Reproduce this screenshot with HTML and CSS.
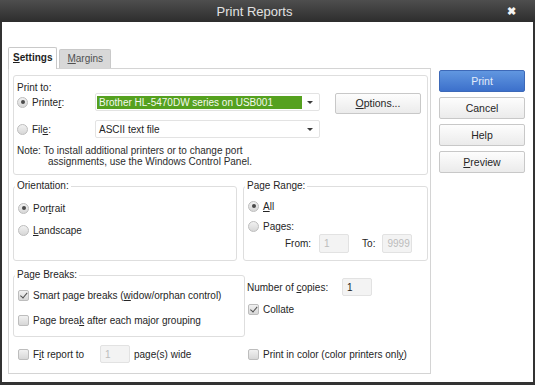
FILE: index.html
```html
<!DOCTYPE html>
<html lang="en">
<head>
    <meta charset="UTF-8">
    <meta name="viewport" content="width=device-width, initial-scale=1.0">
    <title>Print Reports</title>
    <link rel="stylesheet" href="styles.css">
</head>
<body>

    <div class="window">
        <div class="titlebar">
            <span class="title">Print Reports</span>
            <span class="close">&#10006;</span>
        </div>

        <div class="frame">
            <div class="content">

                <div class="main">
                    <div class="tabs">
                        <div class="tab active"><u>S</u>ettings</div>
                        <div class="tab"><u>M</u>argins</div>
                    </div>

                    <div class="panel">
                        <!-- Print to -->
                        <div class="box print-to">
                            <div class="box-label">Print to:</div>

                            <div class="dest-row">
                                <span class="radio checked"></span>
                                <span class="dest-label">Printe<u>r</u>:</span>
                                <div class="select">
                                    <span class="select-value highlighted">Brother HL-5470DW series on USB001</span>
                                    <span class="select-arrow"></span>
                                </div>
                                <a href="#" class="btn options-btn"><u>O</u>ptions...</a>
                            </div>

                            <div class="dest-row file-row">
                                <span class="radio"></span>
                                <span class="dest-label">Fil<u>e</u>:</span>
                                <div class="select">
                                    <span class="select-value">ASCII text file</span>
                                    <span class="select-arrow"></span>
                                </div>
                            </div>

                            <p class="note">Note: To install additional printers or to change port<br>assignments, use the Windows Control Panel.</p>
                        </div>

                        <div class="split">
                            <fieldset class="group orientation">
                                <legend>Orientation:</legend>
                                <div class="opts">
                                    <div class="opt"><span class="radio checked"></span><span>Por<u>t</u>rait</span></div>
                                    <div class="opt"><span class="radio"></span><span><u>L</u>andscape</span></div>
                                </div>
                            </fieldset>

                            <fieldset class="group range">
                                <legend>Page Range:</legend>
                                <div class="opts tight">
                                    <div class="opt"><span class="radio checked"></span><span><u>A</u>ll</span></div>
                                    <div class="opt"><span class="radio"></span><span>Pa<u>g</u>es:</span></div>
                                    <div class="from-to">
                                        <span>From:</span>
                                        <span class="field disabled from-field">1</span>
                                        <span class="to-label">To:</span>
                                        <span class="field disabled to-field">9999</span>
                                    </div>
                                </div>
                            </fieldset>
                        </div>

                        <div class="split lower">
                            <fieldset class="group breaks">
                                <legend>Page Breaks:</legend>
                                <div class="opts wide">
                                    <div class="opt"><span class="check checked"></span><span>Smart page breaks (<u>w</u>idow/orphan control)</span></div>
                                    <div class="opt"><span class="check"></span><span>Page brea<u>k</u> after each major grouping</span></div>
                                </div>
                            </fieldset>

                            <div class="copies">
                                <div class="copies-row">
                                    <span class="copies-label">Number of <u>c</u>opies:</span>
                                    <span class="field copies-field">1</span>
                                </div>
                                <div class="opt"><span class="check checked"></span><span>Collate</span></div>
                            </div>
                        </div>

                        <div class="bottom-row">
                            <div class="fit">
                                <span class="check"></span>
                                <span class="fit-label">F<u>i</u>t report to</span>
                                <span class="field disabled fit-field">1</span>
                                <span>page(s) wide</span>
                            </div>
                            <div class="opt"><span class="check"></span><span>Print in color (color printers onl<u>y</u>)</span></div>
                        </div>
                    </div>
                </div>

                <div class="actions">
                    <a href="#" class="btn primary">Print</a>
                    <a href="#" class="btn">Cancel</a>
                    <a href="#" class="btn">Help</a>
                    <a href="#" class="btn"><u>P</u>review</a>
                </div>

            </div>
        </div>
    </div>

</body>
</html>
```

FILE: styles.css
```css
body {
    margin: 0;
    background-color: #303030;
    font-family: 'Liberation Sans', Arial, sans-serif;
    font-size: 10px;
    color: #252525;
}

.window {
    width: 535px;
    height: 385px;
    display: flex;
    flex-direction: column;
}

/* title bar */
.titlebar {
    height: 22px;
    display: flex;
    align-items: center;
    padding-left: 8px;
    background: linear-gradient(#4e4e4e, #2d2d2d);
    color: #e2e2e2;
}

.title {
    flex: 1;
    text-align: center;
    font-size: 13px;
}

.close {
    width: 20px;
    margin-right: 14px;
    text-align: center;
    font-size: 11px;
    font-weight: bold;
    color: #f4f4f4;
}

.frame {
    flex: 1;
    display: flex;
    padding: 0 2px 3px;
    background-color: #333;
}

.content {
    flex: 1;
    display: flex;
    gap: 8px;
    padding: 26px 8px 0 6px;
    background-color: #fff;
}

/* tabs */
.main {
    width: 423px;
}

.tabs {
    display: flex;
    align-items: flex-end;
    gap: 2px;
    height: 20px;
    position: relative;
    z-index: 1;
}

.tab {
    height: 18px;
    line-height: 18px;
    padding: 0 7px;
    border: 1px solid #c9c9c9;
    border-bottom: none;
    border-radius: 2px 2px 0 0;
    background-color: #d8d8d8;
    color: #505050;
}

.tab.active {
    height: 21px;
    line-height: 20px;
    padding: 0 4px;
    margin-bottom: -1px;
    background-color: #fff;
    color: #1e1e1e;
    font-weight: bold;
}

.panel {
    height: 306px;
    box-sizing: border-box;
    padding: 6px 2px 0 4px;
    border: 1px solid #d4d4d4;
}

/* print to box */
.box {
    border: 1px solid #dedede;
    border-radius: 3px;
    padding: 6px 3px 7px;
}

.box-label {
    line-height: 12px;
}

.dest-row {
    display: flex;
    align-items: center;
    height: 18px;
    margin-top: -1px;
}

.dest-row.file-row {
    margin-top: 9px;
}

.dest-label {
    width: 63px;
}

.select {
    width: 225px;
    height: 18px;
    box-sizing: border-box;
    display: flex;
    align-items: center;
    padding: 1px;
    border: 1px solid #e3e3e3;
    border-radius: 2px;
}

.select-value {
    flex: 1;
    height: 13px;
    line-height: 13px;
    padding-left: 2px;
}

.select-value.highlighted {
    background-color: #55a11f;
    color: #f4f9ee;
}

.select-arrow {
    width: 16px;
    display: flex;
    justify-content: center;
}

.select-arrow::before {
    content: '';
    border-left: 3px solid transparent;
    border-right: 3px solid transparent;
    border-top: 3px solid #3c3c3c;
}

.note {
    margin: 7px 0 0;
    line-height: 11px;
    padding-left: 31px;
    text-indent: -31px;
    color: #2c2c2c;
}

/* radios and checkboxes */
.radio,
.check {
    display: inline-block;
    width: 11px;
    height: 11px;
    box-sizing: border-box;
    margin-right: 4px;
    border: 1px solid #bdbdbd;
    background: linear-gradient(#f1f1f1, #d7d7d7);
    flex-shrink: 0;
    position: relative;
}

.radio {
    border-radius: 50%;
}

.radio.checked::after {
    content: '';
    position: absolute;
    left: 2.5px;
    top: 2.5px;
    width: 4px;
    height: 4px;
    border-radius: 50%;
    background-color: #4a4a4a;
}

.check {
    border-radius: 2px;
}

.check.checked::after {
    content: '';
    position: absolute;
    left: 3px;
    top: 0.5px;
    width: 2.5px;
    height: 5.5px;
    border-right: 1.5px solid #4d4d4d;
    border-bottom: 1.5px solid #4d4d4d;
    transform: rotate(40deg);
}

/* group boxes */
.split {
    display: flex;
    gap: 6px;
    margin-top: 5px;
}

.split.lower {
    gap: 2px;
    margin-top: 8px;
}

.group {
    margin: 0;
    padding: 0 0 0 1px;
    border: 1px solid #dedede;
    border-radius: 3px;
    min-width: 0;
}

.group legend {
    padding: 0 2px;
    line-height: 12px;
}

.orientation {
    width: 224px;
    box-sizing: border-box;
}

.range {
    width: 185px;
    box-sizing: border-box;
}

.breaks {
    width: 232px;
    box-sizing: border-box;
}

.opts {
    display: flex;
    flex-direction: column;
    gap: 10px;
    padding: 10px 0 0 3px;
}

.opts.tight {
    gap: 8px;
    padding: 8px 0 7px 3px;
}

.opts.wide {
    gap: 13px;
    padding: 8px 0 10px 3px;
}

.opt {
    display: flex;
    align-items: center;
    height: 12px;
}

.from-to {
    display: flex;
    align-items: center;
    margin-top: -6px;
    padding-left: 37px;
}

.field {
    height: 19px;
    width: 30px;
    box-sizing: border-box;
    line-height: 17px;
    padding-left: 4px;
    border: 1px solid #e2e2e2;
    border-radius: 2px;
    background-color: #f3f3f3;
}

.field.disabled {
    color: #bcbcbc;
}

.from-field {
    margin-left: 8px;
}

.to-label {
    margin-left: 13px;
    margin-right: 7px;
}

/* copies */
.copies {
    padding-top: 9px;
}

.copies-row {
    display: flex;
    align-items: center;
    margin-bottom: 7px;
}

.copies-label {
    width: 95px;
}

.copies-field {
    height: 18px;
    color: #222;
}

.copies .opt {
    padding-left: 1px;
}

/* bottom row */
.bottom-row {
    display: flex;
    align-items: center;
    margin-top: 8px;
    padding-left: 5px;
}

.fit {
    display: flex;
    align-items: center;
    width: 230px;
}

.fit-label {
    width: 67px;
}

.fit-field {
    margin-right: 4px;
    height: 18px;
}

/* buttons */
.actions {
    width: 86px;
    display: flex;
    flex-direction: column;
    gap: 5px;
    padding-top: 22px;
}

.btn {
    display: block;
    height: 22px;
    box-sizing: border-box;
    line-height: 20px;
    text-align: center;
    text-decoration: none;
    font-size: 10.5px;
    color: #262626;
    border: 1px solid #c8c8c8;
    border-radius: 2px;
    background: linear-gradient(#fdfdfd, #ebebeb);
}

.btn.primary {
    border-color: #3d69b8;
    background: linear-gradient(#6197e0, #3c70cb);
    color: #e3ecfa;
}

.options-btn {
    width: 86px;
    height: 21px;
    line-height: 19px;
    margin-left: 15px;
    align-self: flex-start;
    flex-shrink: 0;
}
```
